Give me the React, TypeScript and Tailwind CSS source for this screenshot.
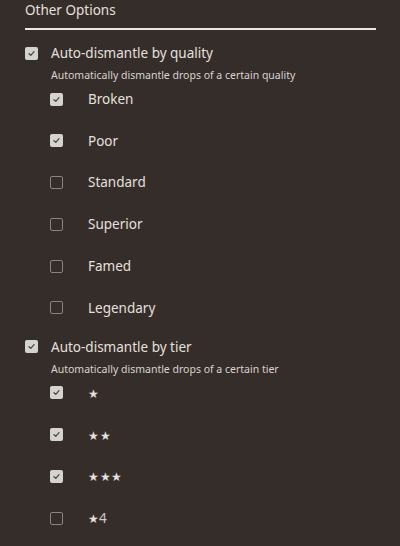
type Item = { label: React.ReactNode; checked: boolean };

function Box({ checked }: { checked: boolean }) {
  if (checked) {
    return (
      <span className="flex h-[13px] w-[13px] shrink-0 items-center justify-center rounded-[2px] bg-[#d6d2ce]">
        <svg width="9" height="9" viewBox="0 0 10 10" fill="none">
          <path d="M2.2 5.2 L4.2 7 L7.8 3" stroke="#4a4441" strokeWidth="1.4" strokeLinecap="round" strokeLinejoin="round" />
        </svg>
      </span>
    );
  }
  return <span className="h-[13px] w-[13px] shrink-0 rounded-[2px] border-[1.5px] border-[#8a8480]" />;
}

function Stars({ n }: { n: number }) {
  return <span className="text-[12px] tracking-[0.5px]">{"★".repeat(n)}</span>;
}

const quality: Item[] = [
  { label: "Broken", checked: true },
  { label: "Poor", checked: true },
  { label: "Standard", checked: false },
  { label: "Superior", checked: false },
  { label: "Famed", checked: false },
  { label: "Legendary", checked: false },
];

const tiers: Item[] = [
  { label: <Stars n={1} />, checked: true },
  { label: <Stars n={2} />, checked: true },
  { label: <Stars n={3} />, checked: true },
  {
    label: (
      <span className="flex items-baseline">
        <span className="text-[12px]">★</span>
        <span className="text-[#d0cbc7]">4</span>
      </span>
    ),
    checked: false,
  },
];

function Group({ title, desc, items, mt }: { title: string; desc: string; items: Item[]; mt: string }) {
  return (
    <div className={mt}>
      <div className="flex h-5 items-center gap-[13px]">
        <Box checked />
        <span className="text-[13.5px]">{title}</span>
      </div>
      <p className="mt-[4px] pl-[26px] text-[10.5px] leading-4 text-[#d8d3cf]">{desc}</p>
      <div className="mt-[6px] flex flex-col gap-[21.8px] pl-[25px]">
        {items.map((it, i) => (
          <div key={i} className="flex h-5 items-center">
            <Box checked={it.checked} />
            <span className="ml-[25px] text-[13.5px]">{it.label}</span>
          </div>
        ))}
      </div>
    </div>
  );
}

export default function App() {
  return (
    <div className="h-[546px] w-[400px] overflow-hidden bg-[#352d2a] px-[25px] font-['Noto_Sans',sans-serif] text-[#e4e0dc]">
      <h2 className="text-[13.5px] leading-5">Other Options</h2>
      <div className="mt-[8px] h-[2px] w-[351px] bg-[#ebe7e3]" />
      <Group
        mt="mt-[13px]"
        title="Auto-dismantle by quality"
        desc="Automatically dismantle drops of a certain quality"
        items={quality}
      />
      <Group
        mt="mt-[19px]"
        title="Auto-dismantle by tier"
        desc="Automatically dismantle drops of a certain tier"
        items={tiers}
      />
    </div>
  );
}
